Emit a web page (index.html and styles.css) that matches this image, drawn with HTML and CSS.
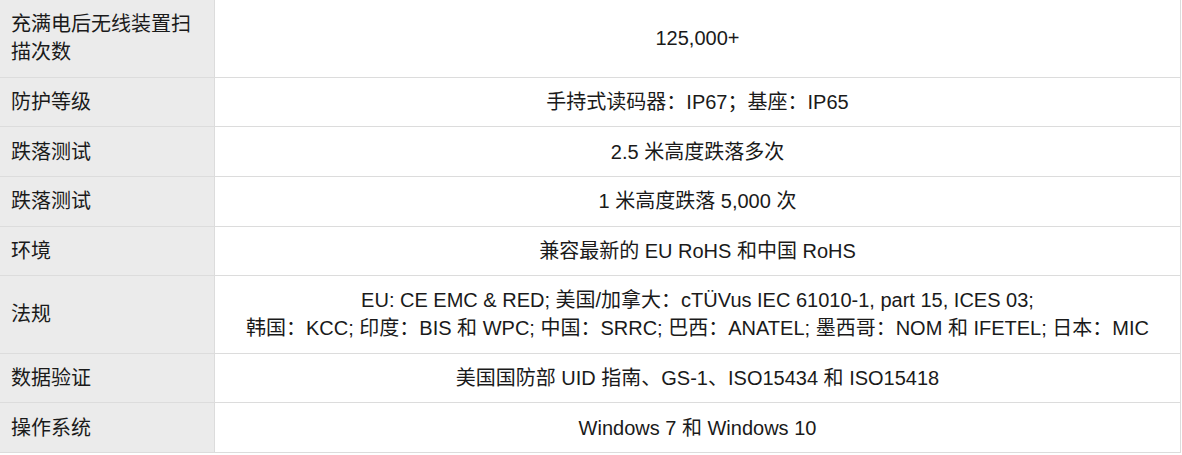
FILE: index.html
```html
<!DOCTYPE html>
<html lang="zh-CN">
<head>
<meta charset="utf-8">
<title>规格</title>
<link rel="stylesheet" href="styles.css">
</head>
<body>
<table class="spec">
  <tbody>
    <tr><th>充满电后无线装置扫描次数</th><td>125,000+</td></tr>
    <tr><th>防护等级</th><td>手持式读码器：IP67；基座：IP65</td></tr>
    <tr><th>跌落测试</th><td>2.5 米高度跌落多次</td></tr>
    <tr><th>跌落测试</th><td>1 米高度跌落 5,000 次</td></tr>
    <tr><th>环境</th><td>兼容最新的 EU RoHS 和中国 RoHS</td></tr>
    <tr><th>法规</th><td>EU: CE EMC &amp; RED; 美国/加拿大：cTÜVus IEC 61010-1, part 15, ICES 03;<br>韩国：KCC; 印度：BIS 和 WPC; 中国：SRRC; 巴西：ANATEL; 墨西哥：NOM 和 IFETEL; 日本：MIC</td></tr>
    <tr><th>数据验证</th><td>美国国防部 UID 指南、GS-1、ISO15434 和 ISO15418</td></tr>
    <tr><th>操作系统</th><td>Windows 7 和 Windows 10</td></tr>
  </tbody>
</table>
</body>
</html>
```

FILE: styles.css
```css
html, body {
  margin: 0;
  padding: 0;
  background: #ffffff;
}

.spec {
  border-collapse: collapse;
  width: 1182px;
  margin: -1px 0 0 -1px;
  font-family: "Liberation Sans", Arial, "Noto Sans CJK SC", sans-serif;
  font-size: 20px;
  line-height: 28px;
  color: #1a1a1a;
  table-layout: fixed;
}

.spec th,
.spec td {
  border: 1px solid #dcdcdc;
  padding: 10.32px 11px;
  vertical-align: middle;
  font-weight: normal;
}

.spec th {
  width: 192px;
  background: #ebebeb;
  text-align: left;
}

.spec td {
  background: #ffffff;
  text-align: center;
}
```
